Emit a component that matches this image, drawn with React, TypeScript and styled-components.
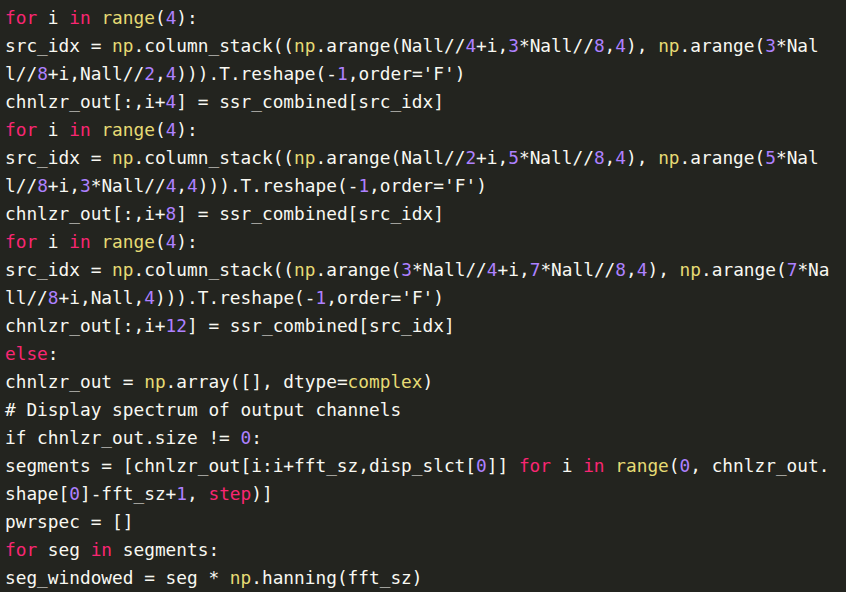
import React from "react";
import styled, { createGlobalStyle } from "styled-components";

const Global = createGlobalStyle`
  html, body {
    margin: 0;
    padding: 0;
    background: #23241f;
    overflow: hidden;
  }
`;

const Editor = styled.div`
  width: 846px;
  height: 592px;
  overflow: hidden;
  background: #23241f;
  box-sizing: border-box;
`;

const Code = styled.pre`
  margin: -24px 0 0 0;
  padding: 0 0 0 5px;
  font-family: "DejaVu Sans Mono", "Liberation Mono", monospace;
  font-size: 17.8px;
  line-height: 28px;
  color: #f8f8f2;
  white-space: pre;
`;

const Line = styled.div`
  height: 28px;
`;

type Kind = "t" | "k" | "f" | "n";

const colors: Record<Kind, string> = {
  t: "#f8f8f2",
  k: "#f92672",
  f: "#e6db74",
  n: "#ae81ff",
};

const Tok = styled.span<{ $kind: Kind }>`
  color: ${(p) => colors[p.$kind]};
`;

const lines = [
  "chnlzr_out[:,i] = ssr_combined[src_idx]",
  "for i in range(4):",
  "src_idx = np.column_stack((np.arange(Nall//4+i,3*Nall//8,4), np.arange(3*Nal",
  "l//8+i,Nall//2,4))).T.reshape(-1,order='F')",
  "chnlzr_out[:,i+4] = ssr_combined[src_idx]",
  "for i in range(4):",
  "src_idx = np.column_stack((np.arange(Nall//2+i,5*Nall//8,4), np.arange(5*Nal",
  "l//8+i,3*Nall//4,4))).T.reshape(-1,order='F')",
  "chnlzr_out[:,i+8] = ssr_combined[src_idx]",
  "for i in range(4):",
  "src_idx = np.column_stack((np.arange(3*Nall//4+i,7*Nall//8,4), np.arange(7*Na",
  "ll//8+i,Nall,4))).T.reshape(-1,order='F')",
  "chnlzr_out[:,i+12] = ssr_combined[src_idx]",
  "else:",
  "chnlzr_out = np.array([], dtype=complex)",
  "# Display spectrum of output channels",
  "if chnlzr_out.size != 0:",
  "segments = [chnlzr_out[i:i+fft_sz,disp_slct[0]] for i in range(0, chnlzr_out.",
  "shape[0]-fft_sz+1, step)]",
  "pwrspec = []",
  "for seg in segments:",
  "seg_windowed = seg * np.hanning(fft_sz)",
];

const KEYWORDS = new Set(["for", "in", "else", "step"]);
const FUNCS = new Set(["np", "range", "complex"]);

function tokenize(src: string): { kind: Kind; text: string }[] {
  if (src.startsWith("#")) return [{ kind: "t", text: src }];
  const parts = src.match(/[A-Za-z_][A-Za-z0-9_]*|\d+|./g) || [];
  const out: { kind: Kind; text: string }[] = [];
  for (const p of parts) {
    let kind: Kind = "t";
    if (/^\d+$/.test(p)) kind = "n";
    else if (KEYWORDS.has(p)) kind = "k";
    else if (FUNCS.has(p)) kind = "f";
    const last = out[out.length - 1];
    if (last && last.kind === kind) last.text += p;
    else out.push({ kind, text: p });
  }
  return out;
}

export default function App() {
  return (
    <>
      <Global />
      <Editor>
        <Code>
          {lines.map((l, i) => (
            <Line key={i}>
              {tokenize(l).map((t, j) => (
                <Tok key={j} $kind={t.kind}>
                  {t.text}
                </Tok>
              ))}
            </Line>
          ))}
        </Code>
      </Editor>
    </>
  );
}
